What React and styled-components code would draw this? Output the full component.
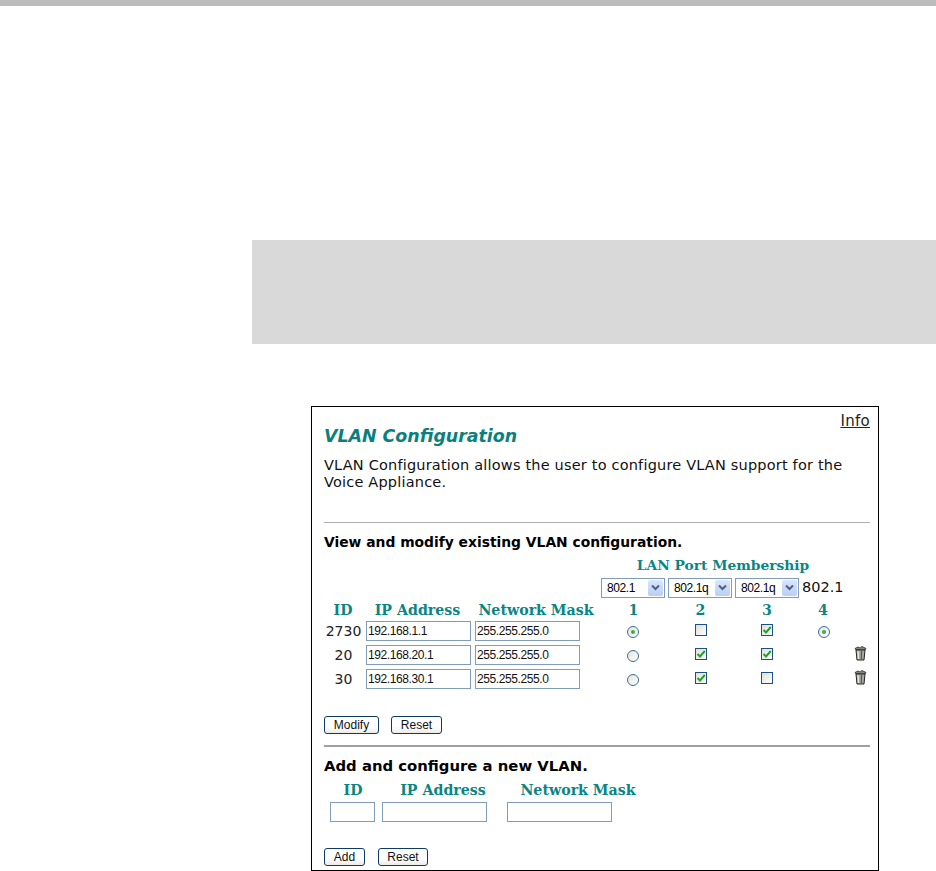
import React from 'react';
import styled, { createGlobalStyle } from 'styled-components';

const GlobalStyle = createGlobalStyle`
  html, body {
    margin: 0;
    padding: 0;
    background: #ffffff;
  }
  body {
    font-family: "DejaVu Sans", Verdana, sans-serif;
    color: #000;
  }
`;

const Page = styled.div`
  width: 936px;
  height: 871px;
  overflow: hidden;
`;

const TopBar = styled.div`
  height: 6px;
  background: #bbbbbb;
`;

const NoteBand = styled.div`
  margin: 234px 0 0 252px;
  height: 104px;
  background: #d9d9d9;
`;

const Panel = styled.div`
  box-sizing: border-box;
  margin: 62px 0 0 311px;
  width: 568px;
  height: 465px;
  border: 1px solid #000;
  padding: 0 8px 0 12px;
`;

const InfoLink = styled.div`
  height: 28px;
  padding-top: 6px;
  box-sizing: border-box;
  text-align: right;
  font-size: 15px;
  letter-spacing: 0.3px;
  line-height: 17px;
  text-decoration: underline;
  color: #222;
  margin-bottom: -11px;
`;

const Title = styled.h1`
  margin: 0;
  height: 24px;
  font-size: 17.4px;
  line-height: 24px;
  font-weight: bold;
  font-style: italic;
  color: #0a7f7f;
`;

const Intro = styled.p`
  margin: 9px 0 0;
  font-size: 14.5px;
  letter-spacing: 0.19px;
  line-height: 17px;
  height: 34px;
  color: #111;
  white-space: nowrap;
`;

const Rule = styled.hr`
  margin: ${(p) => p.$top}px 0 0;
  border: 0;
  height: ${(p) => p.$weight || 1}px;
  background: ${(p) => p.$color || '#b0b0b0'};
`;

const SectionHeading = styled.h2`
  margin: ${(p) => p.$top}px 0 0;
  font-size: ${(p) => p.$size}px;
  line-height: 17px;
  font-weight: bold;
  color: #000;
`;

const ConfigGrid = styled.div`
  display: grid;
  grid-template-columns: 42px 109px 126px 67px 67px 68px 42px 25px;
  grid-template-rows: 17px 27px 18px 24px 24px 24px;
  margin-top: 6px;
  align-items: center;
`;

const Spacer = styled.div`
  grid-column: span ${(p) => p.$span || 1};
`;

const MembershipLabel = styled.div`
  grid-column: 4 / 8;
  text-align: center;
  font-family: "DejaVu Serif", serif;
  font-weight: bold;
  font-size: 13.8px;
  line-height: 17px;
  color: #0a8585;
`;

const Head = styled.div`
  font-family: "DejaVu Serif", serif;
  font-weight: bold;
  font-size: 14.2px;
  line-height: 17px;
  color: #0a8585;
  text-align: center;
  white-space: nowrap;
  padding-right: ${(p) => p.$shift || 0}px;
`;

const SelectBox = styled.div`
  box-sizing: border-box;
  width: 64px;
  height: 20px;
  border: 1px solid #7f9db9;
  background: #fff;
  display: flex;
  align-items: center;
  justify-content: space-between;
  padding: 0 1px 0 5px;
  font-family: "Liberation Sans", Arial, sans-serif;
  font-size: 12px;
  letter-spacing: -0.4px;
`;

const SelectArrow = styled.span`
  width: 15px;
  height: 16px;
  border-radius: 2px;
  background: linear-gradient(#dbe6fb, #b9cdf5);
  display: flex;
  align-items: center;
  justify-content: center;
`;

const PlainValue = styled.div`
  font-size: 14.5px;
  line-height: 17px;
  margin-left: -1px;
  white-space: nowrap;
  color: #111;
`;

const RowId = styled.div`
  font-size: 14px;
  line-height: 17px;
  text-align: center;
  color: #222;
  padding-right: 3px;
  white-space: nowrap;
`;

const TextBox = styled.input`
  box-sizing: border-box;
  display: block;
  width: ${(p) => p.$width}px;
  height: 20px;
  border: 1px solid #7f9db9;
  border-radius: 0;
  padding: 0 1px;
  margin: 0;
  background: #fff;
  outline: 0;
  font-family: "Liberation Sans", Arial, sans-serif;
  font-size: 12px;
  letter-spacing: -0.4px;
  color: #111;
`;

const Mark = styled.div`
  display: flex;
  justify-content: center;
  padding-right: ${(p) => p.$shift || 0}px;
  transform: translateY(${(p) => p.$lift || 0}px);
`;

const RadioDot = styled.span`
  box-sizing: border-box;
  width: 12px;
  height: 12px;
  border: 1px solid #3f6d93;
  border-radius: 50%;
  background: linear-gradient(135deg, #e4e4dc, #ffffff);
  display: flex;
  align-items: center;
  justify-content: center;
  &::after {
    content: '';
    display: ${(p) => (p.$on ? 'block' : 'none')};
    width: 4px;
    height: 4px;
    border-radius: 50%;
    background: #35b040;
  }
`;

const CheckSquare = styled.span`
  box-sizing: border-box;
  width: 12px;
  height: 12px;
  border: 1px solid #1c5180;
  background: linear-gradient(135deg, #dedfd8, #ffffff);
  display: flex;
  align-items: center;
  justify-content: center;
`;

const TrashCell = styled.div`
  display: flex;
  justify-content: flex-end;
  padding-right: 3px;
  transform: translateY(-2px);
`;

const ButtonRow = styled.div`
  display: flex;
  gap: ${(p) => p.$gap}px;
  margin-top: ${(p) => p.$top}px;
`;

const PushButton = styled.button`
  box-sizing: border-box;
  width: ${(p) => p.$width}px;
  height: 18px;
  padding: 0;
  border: 1px solid #0d3a67;
  border-radius: 3px;
  background: linear-gradient(#ffffff 60%, #ecebe4);
  font-family: "Liberation Sans", Arial, sans-serif;
  font-size: 12px;
  line-height: 16px;
  color: #111;
`;

const AddGrid = styled.div`
  display: grid;
  grid-template-columns: 52px 125px 142px;
  grid-template-rows: 17px 20px;
  row-gap: 3px;
  margin: 7px 0 0 6px;
  align-items: center;
`;

const Check = () => (
  <svg width="10" height="10" viewBox="0 0 10 10">
    <path d="M1.5 5 L4 7.5 L8.8 2" fill="none" stroke="#22a02a" strokeWidth="2" />
  </svg>
);

const ChevronDown = () => (
  <svg width="9" height="7" viewBox="0 0 9 7">
    <path d="M1 1.5 L4.5 5 L8 1.5" fill="none" stroke="#4d6185" strokeWidth="2" />
  </svg>
);

const Trash = () => (
  <svg width="13" height="15" viewBox="0 0 13 15">
    <path d="M1 2.5 L4 1 L6 2 L8 0.5 L12 2.5 L11 4 L2 4 Z" fill="#8a8a86" stroke="#222" strokeWidth="0.8" />
    <path d="M2 4 L11 4 L10 14 L3 14 Z" fill="#a9a9a5" stroke="#222" strokeWidth="1" />
    <path d="M4 5 L4.5 13" stroke="#e8e8e4" strokeWidth="1.4" />
    <path d="M7.6 5 L7.3 13" stroke="#555" strokeWidth="1.2" />
  </svg>
);

const Select = ({ value }) => (
  <SelectBox>
    {value}
    <SelectArrow><ChevronDown /></SelectArrow>
  </SelectBox>
);

const rows = [
  { id: '2730', ip: '192.168.1.1', p1: 'on', p2: false, p3: true, p4: true },
  { id: '20', ip: '192.168.20.1', p1: 'off', p2: true, p3: true, trash: true },
  { id: '30', ip: '192.168.30.1', p1: 'off', p2: true, p3: false, trash: true },
];

const App = () => (
  <Page>
    <GlobalStyle />
    <TopBar />
    <NoteBand />
    <Panel>
      <InfoLink>Info</InfoLink>
      <Title>VLAN Configuration</Title>
      <Intro>
        VLAN Configuration allows the user to configure VLAN support for the<br />
        Voice Appliance.
      </Intro>
      <Rule $top={31} />
      <SectionHeading $top={11} $size={13.85}>View and modify existing VLAN configuration.</SectionHeading>
      <ConfigGrid>
        <Spacer $span={3} />
        <MembershipLabel>LAN Port Membership</MembershipLabel>
        <Spacer />
        <Spacer $span={3} />
        <Select value="802.1" />
        <Select value="802.1q" />
        <Select value="802.1q" />
        <PlainValue>802.1</PlainValue>
        <Spacer />
        <Head $shift={4}>ID</Head>
        <Head $shift={6}>IP Address</Head>
        <Head $shift={4}>Network Mask</Head>
        <Head $shift={2}>1</Head>
        <Head $shift={2}>2</Head>
        <Head $shift={4}>3</Head>
        <Head $shift={2}>4</Head>
        <Spacer />
        {rows.map((row) => (
          <React.Fragment key={row.id}>
            <RowId>{row.id}</RowId>
            <TextBox $width={105} defaultValue={row.ip} />
            <TextBox $width={105} defaultValue="255.255.255.0" />
            <Mark $shift={3} $lift={1}><RadioDot $on={row.p1 === 'on'} /></Mark>
            <Mark $shift={2} $lift={-1}><CheckSquare>{row.p2 && <Check />}</CheckSquare></Mark>
            <Mark $shift={4} $lift={-1}><CheckSquare>{row.p3 && <Check />}</CheckSquare></Mark>
            <Mark $lift={1}>{row.p4 && <RadioDot $on />}</Mark>
            <TrashCell>{row.trash && <Trash />}</TrashCell>
          </React.Fragment>
        ))}
      </ConfigGrid>
      <ButtonRow $gap={12} $top={25}>
        <PushButton $width={55}>Modify</PushButton>
        <PushButton $width={51}>Reset</PushButton>
      </ButtonRow>
      <Rule $top={11} $weight={2} $color="#a0a0a0" />
      <SectionHeading $top={11} $size={14.85}>Add and configure a new VLAN.</SectionHeading>
      <AddGrid>
        <Head $shift={6}>ID</Head>
        <Head $shift={3}>IP Address</Head>
        <Head>Network Mask</Head>
        <TextBox $width={45} />
        <TextBox $width={105} />
        <TextBox $width={105} />
      </AddGrid>
      <ButtonRow $gap={13} $top={26}>
        <PushButton $width={41}>Add</PushButton>
        <PushButton $width={50}>Reset</PushButton>
      </ButtonRow>
    </Panel>
  </Page>
);

export default App;
